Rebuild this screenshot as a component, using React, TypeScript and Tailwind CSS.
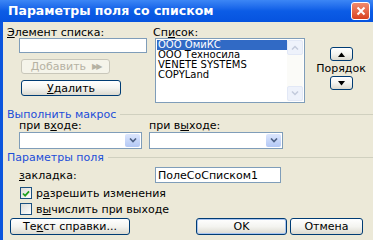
import React from 'react';

const font = { fontFamily: '"DejaVu Sans", Verdana, sans-serif' };

function U({ children }: { children: React.ReactNode }) {
  return <span className="underline underline-offset-[1px]">{children}</span>;
}

function XpButton({
  children,
  className = '',
  disabled = false,
}: {
  children: React.ReactNode;
  className?: string;
  disabled?: boolean;
}) {
  return (
    <div
      className={
        'flex items-center justify-center rounded-[3px] border text-[11px] leading-none ' +
        (disabled
          ? 'border-[#c9c7ba] bg-[#f5f4ea] text-[#b5b2a3] '
          : 'border-[#003c74] bg-gradient-to-b from-[#ffffff] via-[#f4f4f0] to-[#dcdad0] text-black ') +
        className
      }
    >
      {children}
    </div>
  );
}

function GroupHeader({ title }: { title: string }) {
  return (
    <div className="flex items-center gap-[4px] pl-[4px] h-[12px]">
      <span className="text-[11px] leading-none text-[#1c4ed8] whitespace-nowrap">{title}</span>
      <div className="flex-1 h-px bg-[#d0d0bf]" />
    </div>
  );
}

function ComboBox({ className = '' }: { className?: string }) {
  return (
    <div className={'flex h-[17px] border border-[#7f9db9] bg-white ' + className}>
      <div className="flex-1" />
      <div className="m-px w-[15px] rounded-[2px] bg-gradient-to-b from-[#dce6fd] to-[#b3c8f5] flex items-center justify-center">
        <svg width="8" height="5" viewBox="0 0 8 5">
          <path d="M1 0.5 L4 3.5 L7 0.5" stroke="#4d6185" strokeWidth="1.6" fill="none" />
        </svg>
      </div>
    </div>
  );
}

function CheckBox({ checked, children }: { checked?: boolean; children: React.ReactNode }) {
  return (
    <div className="flex items-center gap-[4px] pl-[17px] h-[12px]">
      <div className="w-[12px] h-[12px] border border-[#1c5180] bg-gradient-to-br from-[#dcdcd7] to-white flex items-center justify-center">
        {checked && (
          <svg width="8" height="7" viewBox="0 0 9 8">
            <path d="M1 4 L3.5 6.5 L8 1.5" stroke="#21a121" strokeWidth="2" fill="none" />
          </svg>
        )}
      </div>
      <span className="text-[11px] leading-none">{children}</span>
    </div>
  );
}

function ArrowBtn({ up }: { up?: boolean }) {
  return (
    <XpButton className="w-[23px] h-[14px]">
      <svg width="7" height="5" viewBox="0 0 7 5">
        <path d={up ? 'M0 5 L3.5 0.5 L7 5 Z' : 'M0 0 L3.5 4.5 L7 0 Z'} fill="#000" />
      </svg>
    </XpButton>
  );
}

const items = ['ООО ОмиКС', 'ООО Техносила', 'VENETE SYSTEMS', 'COPYLand'];

export default function App() {
  return (
    <div style={font} className="w-[373px] h-[240px] overflow-hidden bg-[#ece9d8] flex flex-col text-black">
      {/* Title bar */}
      <div className="h-[22px] flex items-center justify-between pl-[8px] pr-[3px] bg-gradient-to-b from-[#3c86f5] via-[#0b5ce6] to-[#0653df]">
        <span className="text-white font-bold text-[12.5px] leading-none">
          Параметры поля со списком
        </span>
        <div className="w-[19px] h-[18px] rounded-[3px] border border-white bg-gradient-to-b from-[#f08a6c] to-[#d8401c] flex items-center justify-center">
          <svg width="10" height="10" viewBox="0 0 10 10">
            <path d="M1.5 1.5 L8.5 8.5 M8.5 1.5 L1.5 8.5" stroke="#fff" strokeWidth="2" />
          </svg>
        </div>
      </div>

      {/* Body */}
      <div className="flex-1 border-l-[3px] border-[#0b55dd] flex flex-col">
        {/* Top section */}
        <div className="flex pt-[5px] h-[86px]">
          <div className="w-[148px] flex flex-col pl-[4px]">
            <span className="text-[11px] leading-[11px]">
              <U>Э</U>лемент списка:
            </span>
            <div className="ml-[12px] w-[128px] h-[15px] border border-[#7f9db9] bg-white" />
            <XpButton disabled className="ml-[14px] mt-[6px] w-[89px] h-[15px] gap-[6px]">
              <span>Добавить</span>
              <span className="text-[8px] tracking-[-2px]">▶▶</span>
            </XpButton>
            <XpButton className="ml-[14px] mt-[6px] w-[100px] h-[16px]">
              <span>
                <U>У</U>далить
              </span>
            </XpButton>
          </div>

          <div className="w-[152px] flex flex-col pl-[2px]">
            <span className="text-[11px] leading-[11px]">
              Сп<U>и</U>сок:
            </span>
            <div className="ml-[2px] w-[150px] h-[65px] border border-[#7f9db9] bg-white flex p-px">
              <div className="flex-1 flex flex-col">
                {items.map((it, i) => (
                  <div
                    key={it}
                    className={
                      'h-[10px] flex items-center px-px text-[10px] leading-[10px] whitespace-nowrap ' +
                      (i === 0 ? 'bg-[#316ac5] text-white' : '')
                    }
                  >
                    {it}
                  </div>
                ))}
              </div>
              <div className="w-[16px] flex flex-col justify-between bg-[#fbfbf8]">
                <div className="h-[15px] rounded-[2px] border border-[#e2e8f6] bg-[#eef2fb] flex items-center justify-center">
                  <svg width="8" height="5" viewBox="0 0 8 5">
                    <path d="M1 4.5 L4 1.5 L7 4.5" stroke="#c3cbdc" strokeWidth="1.5" fill="none" />
                  </svg>
                </div>
                <div className="h-[15px] rounded-[2px] border border-[#e2e8f6] bg-[#eef2fb] flex items-center justify-center">
                  <svg width="8" height="5" viewBox="0 0 8 5">
                    <path d="M1 0.5 L4 3.5 L7 0.5" stroke="#c3cbdc" strokeWidth="1.5" fill="none" />
                  </svg>
                </div>
              </div>
            </div>
          </div>

          <div className="flex-1 flex flex-col items-center pt-[20px] pl-[6px]">
            <ArrowBtn up />
            <span className="text-[11px] leading-none my-[2px]">Порядок</span>
            <ArrowBtn />
          </div>
        </div>

        {/* Macro section */}
        <GroupHeader title="Выполнить макрос" />
        <div className="flex pl-[16px] gap-[7px]">
          <div className="flex flex-col gap-px">
            <span className="text-[11px] leading-none h-[11px]">
              при в<U>х</U>оде:
            </span>
            <ComboBox className="w-[123px]" />
          </div>
          <div className="flex flex-col gap-px">
            <span className="text-[11px] leading-none h-[11px]">
              при в<U>ы</U>ходе:
            </span>
            <ComboBox className="w-[134px]" />
          </div>
        </div>

        {/* Field parameters */}
        <div className="mt-[2px]">
          <GroupHeader title="Параметры поля" />
        </div>
        <div className="flex items-center pl-[16px] mt-[4px]">
          <span className="text-[11px] leading-none w-[136px]">
            <U>з</U>акладка:
          </span>
          <div className="w-[126px] h-[16px] border border-[#7f9db9] bg-white flex items-center px-[2px] text-[11px] leading-none">
            ПолеСоСписком1
          </div>
        </div>
        <div className="flex flex-col gap-[4px] mt-[4px]">
          <CheckBox checked>
            р<U>а</U>зрешить изменения
          </CheckBox>
          <CheckBox>
            в<U>ы</U>числить при выходе
          </CheckBox>
        </div>

        {/* Buttons */}
        <div className="flex items-center mt-[3px] pl-[7px]">
          <XpButton className="w-[120px] h-[17px]">
            <span>
              Те<U>к</U>ст справки...
            </span>
          </XpButton>
          <XpButton className="ml-[66px] w-[91px] h-[17px] shadow-[inset_0_0_0_1px_#a8c4f0]">
            OK
          </XpButton>
          <XpButton className="ml-[3px] w-[73px] h-[17px]">Отмена</XpButton>
        </div>
      </div>
    </div>
  );
}
